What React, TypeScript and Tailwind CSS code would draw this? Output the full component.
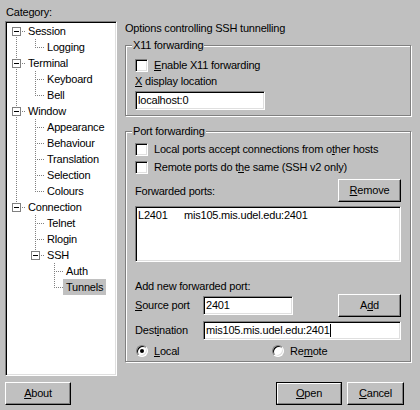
import React from 'react';

type Node = { label: string; children?: Node[] };

const TREE: Node[] = [
  { label: 'Session', children: [{ label: 'Logging' }] },
  { label: 'Terminal', children: [{ label: 'Keyboard' }, { label: 'Bell' }] },
  {
    label: 'Window',
    children: [
      { label: 'Appearance' },
      { label: 'Behaviour' },
      { label: 'Translation' },
      { label: 'Selection' },
      { label: 'Colours' },
    ],
  },
  {
    label: 'Connection',
    children: [
      { label: 'Telnet' },
      { label: 'Rlogin' },
      { label: 'SSH', children: [{ label: 'Auth' }, { label: 'Tunnels' }] },
    ],
  },
];

type Row = { label: string; level: number; guides: boolean[]; last: boolean; first: boolean; open: boolean };

function flatten(nodes: Node[], level = 0, guides: boolean[] = [], out: Row[] = []) {
  nodes.forEach((n, i) => {
    const last = i === nodes.length - 1;
    out.push({ label: n.label, level, guides, last, first: level === 0 && i === 0, open: !!n.children });
    if (n.children) flatten(n.children, level + 1, [...guides, !last], out);
  });
  return out;
}

const ROWS = flatten(TREE);

// dotted tree connectors + the [-] box for one row
function Connectors({ row }: { row: Row }) {
  const w = row.level * 19 + 18;
  const c = 9 + row.level * 19;
  return (
    <svg width={w} height={16} className="shrink-0" shapeRendering="crispEdges">
      <g stroke="#808080" strokeDasharray="1 1">
        {row.guides.map((g, i) =>
          g ? <line key={i} x1={9 + i * 19 + 0.5} y1={0} x2={9 + i * 19 + 0.5} y2={16} /> : null
        )}
        <line x1={c + 0.5} y1={row.first ? 8 : 0} x2={c + 0.5} y2={row.last ? 9 : 16} />
        <line x1={c} y1={8.5} x2={c + 10} y2={8.5} />
      </g>
      {row.open && (
        <g>
          <rect x={c - 3.5} y={4.5} width={8} height={8} fill="white" stroke="#808080" />
          <line x1={c - 2} y1={8.5} x2={c + 3} y2={8.5} stroke="black" />
        </g>
      )}
    </svg>
  );
}

const sunken =
  'bg-white border border-t-[#808080] border-l-[#808080] border-b-white border-r-white shadow-[inset_1px_1px_0_#000,inset_-1px_-1px_0_#dfdfdf]';

const raised =
  'bg-[#c0c0c0] border border-t-white border-l-white border-b-black border-r-black shadow-[inset_-1px_-1px_0_#808080] flex items-center justify-center';

function Button({ className, children }: { className: string; children: React.ReactNode }) {
  return <div className={`${raised} ${className}`}>{children}</div>;
}

function Check({ children }: { children: React.ReactNode }) {
  return (
    <div className="flex items-center gap-[6px] h-[13px]">
      <span className={`w-[13px] h-[13px] shrink-0 ${sunken}`} />
      <span>{children}</span>
    </div>
  );
}

function Radio({ on, children }: { on?: boolean; children: React.ReactNode }) {
  return (
    <div className="flex items-center gap-[6px] h-[12px]">
      <span className="w-[12px] h-[12px] shrink-0 rounded-full bg-white border border-t-[#808080] border-l-[#808080] border-b-white border-r-white shadow-[inset_1px_1px_0_#000,inset_-1px_-1px_0_#dfdfdf] flex items-center justify-center">
        {on && <span className="w-[4px] h-[4px] rounded-full bg-black" />}
      </span>
      <span>{children}</span>
    </div>
  );
}

function Group({ title, className, children }: { title: string; className: string; children: React.ReactNode }) {
  return (
    <div className={`relative border border-[#808080] shadow-[inset_1px_1px_0_#fff,1px_1px_0_#fff] pl-[9px] pr-[9px] flex flex-col ${className}`}>
      <span className="absolute -top-[7px] left-[6px] px-[1px] bg-[#c0c0c0] leading-[13px]">{title}</span>
      {children}
    </div>
  );
}

const U = ({ children }: { children: React.ReactNode }) => <span className="underline underline-offset-[1px]">{children}</span>;

export default function App() {
  return (
    <div className="w-[420px] h-[410px] bg-[#c0c0c0] text-black text-[11px] leading-[13px] tracking-[-0.2px] font-['Liberation_Sans',Arial,sans-serif] select-none">
      <div className="flex pl-[5px] pt-[6px]">
        <div className="w-[112px] flex flex-col">
          <div className="h-[15px] pl-[1px]">Category:</div>
          <div className={`h-[355px] pl-[1px] pt-[1px] ${sunken}`}>
            {ROWS.map(r => (
              <div key={r.label} className="flex h-[16px] items-center">
                <Connectors row={r} />
                <span className={`px-[3px] h-[16px] leading-[16px] ${r.label === 'Tunnels' ? 'bg-[#c0c0c0]' : ''}`}>
                  {r.label}
                </span>
              </div>
            ))}
          </div>
        </div>

        <div className="ml-[8px] w-[286px] flex flex-col pt-[16px]">
          <div className="h-[13px]">Options controlling SSH tunnelling</div>

          <Group title="X11 forwarding" className="mt-[10px] h-[71px] pt-[13px]">
            <Check>
              <U>E</U>nable X11 forwarding
            </Check>
            <div className="mt-[3px] h-[13px]">
              <U>X</U> display location
            </div>
            <div className={`mt-[3px] w-[130px] h-[19px] pl-[2px] flex items-center ${sunken}`}>localhost:0</div>
          </Group>

          <Group title="Port forwarding" className="mt-[15px] h-[231px] pt-[11px]">
            <Check>
              Local ports accept connections from o<U>t</U>her hosts
            </Check>
            <div className="mt-[5px]">
              <Check>
                Remote ports do t<U>h</U>e same (SSH v2 only)
              </Check>
            </div>
            <div className="mt-[5px] flex items-center justify-between h-[23px]">
              <span className="pt-[2px]">Forwarded ports:</span>
              <Button className="w-[63px] h-[23px]">
                <span>
                  <U>R</U>emove
                </span>
              </Button>
            </div>
            <div className={`mt-[4px] h-[56px] pl-[2px] pt-[2px] ${sunken}`}>
              <div className="flex">
                <span className="w-[46px]">L2401</span>
                <span>mis105.mis.udel.edu:2401</span>
              </div>
            </div>
            <div className="mt-[18px] h-[13px]">Add new forwarded port:</div>
            <div className="mt-[1px] flex items-center h-[23px]">
              <span className="w-[68px]">
                <U>S</U>ource port
              </span>
              <div className={`w-[90px] h-[19px] pl-[2px] flex items-center ${sunken}`}>2401</div>
              <Button className="ml-auto w-[63px] h-[23px]">
                <span>
                  A<U>d</U>d
                </span>
              </Button>
            </div>
            <div className="mt-[4px] flex items-center h-[19px]">
              <span className="w-[68px]">
                Dest<U>i</U>nation
              </span>
              <div className={`w-[198px] h-[19px] pl-[2px] flex items-center ${sunken}`}>
                mis105.mis.udel.edu:2401
                <span className="w-[1px] h-[13px] bg-black" />
              </div>
            </div>
            <div className="mt-[5px] flex h-[12px]">
              <div className="w-[137px] pl-[1px]">
                <Radio on>
                  <U>L</U>ocal
                </Radio>
              </div>
              <Radio>
                Re<U>m</U>ote
              </Radio>
            </div>
          </Group>
        </div>
      </div>

      <div className="flex pl-[5px] mt-[6px]">
        <Button className="w-[66px] h-[23px]">
          <span>
            <U>A</U>bout
          </span>
        </Button>
        <div className="ml-[205px] w-[66px] h-[23px] border border-black flex">
          <div className="flex-1 bg-[#c0c0c0] border border-t-white border-l-white border-b-[#808080] border-r-[#808080] flex items-center justify-center">
            <span>
              <U>O</U>pen
            </span>
          </div>
        </div>
        <Button className="ml-[5px] w-[57px] h-[23px]">
          <span>
            <U>C</U>ancel
          </span>
        </Button>
      </div>
    </div>
  );
}
